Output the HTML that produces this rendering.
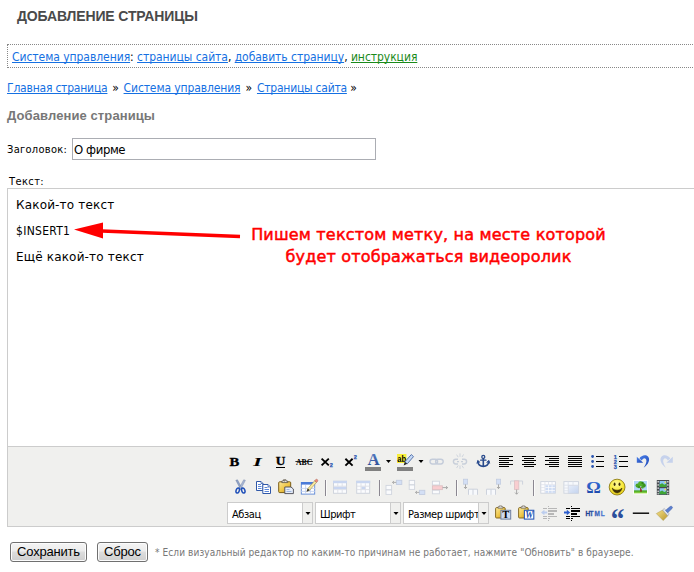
<!DOCTYPE html>
<html lang="ru">
<head>
<meta charset="utf-8">
<title>Добавление страницы</title>
<style>
html,body{margin:0;padding:0;background:#fff;}
body{width:694px;height:572px;position:relative;overflow:hidden;font-family:"DejaVu Sans Condensed","Liberation Sans",sans-serif;font-size:12px;color:#000;}
.abs{position:absolute;white-space:nowrap;}
a{color:#1570e2;text-decoration:underline;text-decoration-skip-ink:none;}
a.g{color:#1a8a1a;}
h1{position:absolute;left:17px;top:8px;margin:0;font:bold 14px/16px "Liberation Sans",sans-serif;color:#4a4a4a;letter-spacing:-0.14px;white-space:nowrap;}
.nav{position:absolute;left:7px;top:44px;width:720px;height:22px;border:1px dotted #888;box-sizing:content-box;}
.nav div{position:absolute;left:4px;top:4px;line-height:16px;white-space:nowrap;letter-spacing:-0.05px;}
.crumbs{left:7px;top:80px;line-height:16px;letter-spacing:-0.05px;}
.crumbs a{letter-spacing:-0.12px;}
h2{position:absolute;left:7px;top:108px;margin:0;font:bold 13px/16px "Liberation Sans",sans-serif;color:#777;white-space:nowrap;letter-spacing:0.1px;}
.lbl{font-size:11px;line-height:14px;}
.inp{position:absolute;left:72px;top:138px;width:302px;height:20px;border:1px solid #abadb3;background:#fff;font-size:13px;line-height:20px;}
.inp span{position:absolute;left:1px;top:1px;letter-spacing:-0.4px;}
.ed{position:absolute;left:7px;top:188px;width:720px;height:337px;border:1px solid #ccc;border-right:none;background:#fff;}
.ed p{position:absolute;left:8px;margin:0;font:12px/16px "DejaVu Sans","Liberation Sans",sans-serif;white-space:nowrap;letter-spacing:0.17px;}
.tb{position:absolute;left:0;top:257px;width:720px;height:79px;border-top:1px solid #ccc;background:#f0f0ee;}
.red{color:#f00;font:16px/22px "DejaVu Sans","Liberation Sans",sans-serif;-webkit-text-stroke:0.5px #f00;text-align:center;letter-spacing:0.19px;}
.btn{position:absolute;top:542px;height:18px;border:1px solid #707070;border-radius:3px;background:linear-gradient(#f4f4f4 0%,#ececec 45%,#dddddd 50%,#cfcfcf 100%);box-shadow:inset 0 0 0 1px #fcfcfc;font:13px/18px "Liberation Sans",sans-serif;text-align:center;color:#000;letter-spacing:-0.2px;}
.note{left:155px;top:547px;font-size:10px;line-height:12px;color:#777;letter-spacing:0.09px;}
.sel{position:absolute;top:502px;width:84px;height:20px;border:1px solid #ccc;background:#fff;font-size:11px;line-height:20px;overflow:hidden;}
.sel span{position:absolute;left:4px;top:1.5px;white-space:nowrap;letter-spacing:-0.42px;}
.sel i{position:absolute;left:74px;top:0;width:10px;height:20px;background:#f0f0ee;border-left:1px solid #ccc;}
#ico{position:absolute;left:0;top:0;}
</style>
</head>
<body>
<h1>ДОБАВЛЕНИЕ СТРАНИЦЫ</h1>
<div class="nav"><div><a href="#">Система управления</a>: <a href="#">страницы сайта</a>, <a href="#">добавить страницу</a>, <a href="#" class="g">инструкция</a></div></div>
<div class="abs crumbs"><a href="#" style="letter-spacing:-0.21px">Главная страница</a> <span style="padding:0 1.400px">»</span> <a href="#">Система управления</a> <span style="padding:0 1.600px">»</span> <a href="#" style="letter-spacing:-0.23px">Страницы сайта</a> »</div>
<h2>Добавление страницы</h2>
<div class="abs lbl" style="left:7px;top:143px;letter-spacing:0.3px;">Заголовок:</div>
<div class="inp"><span>О фирме</span></div>
<div class="abs lbl" style="left:9px;top:175px;letter-spacing:0.4px;">Текст:</div>
<div class="ed">
<p style="top:8px;">Какой-то текст</p>
<p style="top:34px;font-family:'DejaVu Sans Condensed','Liberation Sans',sans-serif;letter-spacing:0.3px;">$INSERT1</p>
<p style="top:60px;">Ещё какой-то текст</p>
<div class="tb" id="tb"></div>
</div>
<svg class="abs" style="left:70px;top:218px;" width="180" height="26" viewBox="70 218 180 26"><polygon points="74,229.5 103,222.5 103,238.5" fill="#f00"/><line x1="102" y1="231" x2="240" y2="236.5" stroke="#f00" stroke-width="3.4"/></svg>
<div class="abs red" style="left:228.500px;top:224px;width:400px;">Пишем текстом метку, на месте которой<br>будет отображаться видеоролик</div>
<div class="sel" style="left:227px;"><span>Абзац</span><i></i></div>
<div class="sel" style="left:315px;"><span>Шрифт</span><i></i></div>
<div class="sel" style="left:403px;"><span>Размер шрифта</span><i></i></div>
<svg id="ico" width="694" height="572" viewBox="0 0 694 572">
<defs>
<linearGradient id="gA" x1="0" y1="0" x2="0" y2="1"><stop offset="0" stop-color="#5f88cc"/><stop offset="1" stop-color="#1f3f8c"/></linearGradient>
<linearGradient id="gClip" x1="0" y1="0" x2="1" y2="1"><stop offset="0" stop-color="#fbe9a0"/><stop offset="0.500" stop-color="#f0c84a"/><stop offset="1" stop-color="#c4901c"/></linearGradient>
<linearGradient id="gMerge" x1="0" y1="0" x2="1" y2="1"><stop offset="0" stop-color="#e6edf9"/><stop offset="1" stop-color="#c5d4ef"/></linearGradient>
<linearGradient id="gOm" x1="0" y1="0" x2="0" y2="1"><stop offset="0" stop-color="#3a74e0"/><stop offset="1" stop-color="#173f9f"/></linearGradient>
<radialGradient id="gSm" cx="0.450" cy="0.300" r="0.750"><stop offset="0" stop-color="#fdf89a"/><stop offset="0.550" stop-color="#f8ea3c"/><stop offset="1" stop-color="#e0c416"/></radialGradient>
<linearGradient id="gGr" x1="0" y1="0" x2="0" y2="1"><stop offset="0" stop-color="#2b9a12"/><stop offset="1" stop-color="#a4dc52"/></linearGradient>
<linearGradient id="gHtml" gradientUnits="userSpaceOnUse" x1="0" y1="0" x2="22" y2="0"><stop offset="0" stop-color="#1b3c8c"/><stop offset="1" stop-color="#4f80dc"/></linearGradient>
<linearGradient id="gBr" x1="0" y1="0" x2="1" y2="1"><stop offset="0" stop-color="#f4e08a"/><stop offset="1" stop-color="#b8962c"/></linearGradient>
<linearGradient id="gUndo" x1="0" y1="0" x2="1" y2="1"><stop offset="0" stop-color="#4a7fe8"/><stop offset="1" stop-color="#1f49b8"/></linearGradient>
</defs>
<!-- ROW 1 -->
<g font-family="'Liberation Serif',serif" font-weight="bold" fill="#000" stroke="#000" stroke-width="0.35">
<text x="229.600" y="465.800" font-size="13.200" textLength="9.800" lengthAdjust="spacingAndGlyphs">B</text>
<text x="253.300" y="465.800" font-size="13.400" font-style="italic" stroke-width="0.100" textLength="8.400" lengthAdjust="spacingAndGlyphs">I</text>
<text x="275.8" y="465.4" font-size="12.5" textLength="9.6" lengthAdjust="spacingAndGlyphs">U</text>
<rect x="276" y="467" width="9" height="1" stroke="none"/>
<text x="296" y="465.3" font-size="9.2" stroke-width="0" textLength="16.4" lengthAdjust="spacingAndGlyphs">ABC</text>
<rect x="295.4" y="461.2" width="17.4" height="0.8" stroke="none"/>
</g>
<!-- subscript / superscript -->
<g stroke="#000" stroke-width="1.9" stroke-linecap="butt" fill="none">
<path d="M321.6 458.6L328.8 465.4M328.8 458.6L321.6 465.4"/>
<path d="M345.4 458.8L352.6 465.6M352.6 458.8L345.4 465.6"/>
</g>
<text x="329.8" y="467" font-family="'Liberation Sans',sans-serif" font-weight="bold" font-size="5.6" fill="#2a55b0" stroke="#2a55b0" stroke-width="0.25">2</text>
<text x="353.8" y="459.4" font-family="'Liberation Sans',sans-serif" font-weight="bold" font-size="5.6" fill="#2a55b0" stroke="#2a55b0" stroke-width="0.25">2</text>
<!-- forecolor -->
<text x="367.4" y="465.3" font-family="'Liberation Serif',serif" font-weight="bold" font-size="16.5" fill="url(#gA)" textLength="12.2" lengthAdjust="spacingAndGlyphs">A</text>
<rect x="365" y="467" width="16" height="4" fill="#808080"/>
<path d="M386 460h5l-2.5 3z" fill="#000"/>
<!-- backcolor -->
<rect x="397" y="454" width="9.4" height="9" fill="#f7ee3a"/>
<text x="397.2" y="461.6" font-family="'Liberation Sans',sans-serif" font-size="8.5" font-weight="bold" fill="#000" textLength="8.8" lengthAdjust="spacingAndGlyphs">ab</text>
<path d="M411.3 454.6l2.2 2.0l-6.2 7.2l-2.6 -1.8z" fill="#c4d8f6" stroke="#3a5a9a" stroke-width="0.8"/>
<path d="M404.7 462l2.6 1.8l-3.6 1.6z" fill="#222"/>
<rect x="397" y="467" width="16" height="4" fill="#808080"/>
<path d="M418.5 460h5l-2.5 3z" fill="#000"/>
<!-- link (disabled) -->
<g fill="none" stroke="#c4ccda" stroke-width="1.4">
<rect x="430" y="459.2" width="7.6" height="4.8" rx="2.4"/>
<rect x="435.6" y="459.2" width="7.6" height="4.8" rx="2.4"/>
</g>
<!-- unlink (disabled) -->
<g fill="none" stroke="#c8cfda" stroke-width="1.4">
<path d="M458 459.2h-2.2a2.4 2.4 0 0 0 0 4.8h2.2M457 461.6h2"/>
<path d="M462 459.2h2.2a2.4 2.4 0 0 1 0 4.8h-2.2M461 461.6h2" />
</g>
<g stroke="#c9d0da" stroke-width="0.9">
<path d="M460 453.4v3.4M456.6 454.6l1.6 2.6M463.6 454.4l-1.6 2.6M460 469v-3.4M456.6 468l1.6 -2.6M463.6 468.2l-1.6 -2.6"/>
</g>
<!-- anchor -->
<g fill="none" stroke="#284a8c" stroke-linecap="round">
<circle cx="483.3" cy="456.9" r="1.5" stroke-width="1.3"/>
<path d="M483.3 458.6V466" stroke-width="1.6"/>
<path d="M480.6 460.2h5.4" stroke-width="1.2"/>
<path d="M477.8 461.4c0.4 3.4 2.6 5 5.5 5c2.9 0 5.1 -1.6 5.5 -5" stroke-width="1.6"/>
<path d="M477 463.2l0.8 -2.6l2 1.6M489.6 463.2l-0.8 -2.6l-2 1.6" stroke-width="0.9" fill="#2c4f94"/>
</g>
<!-- align left/center/right/justify -->
<g fill="#000">
<rect x="499" y="456" width="14" height="1"/><rect x="499" y="458" width="10" height="1"/><rect x="499" y="460" width="14" height="1"/><rect x="499" y="462" width="10" height="1"/><rect x="499" y="464" width="14" height="1"/><rect x="499" y="466" width="10" height="1"/>
<rect x="522" y="456" width="14" height="1"/><rect x="524" y="458" width="10" height="1"/><rect x="522" y="460" width="14" height="1"/><rect x="524" y="462" width="10" height="1"/><rect x="522" y="464" width="14" height="1"/><rect x="524" y="466" width="10" height="1"/>
<rect x="545" y="456" width="14" height="1"/><rect x="549" y="458" width="10" height="1"/><rect x="545" y="460" width="14" height="1"/><rect x="549" y="462" width="10" height="1"/><rect x="545" y="464" width="14" height="1"/><rect x="549" y="466" width="10" height="1"/>
<rect x="568" y="456" width="14" height="1"/><rect x="568" y="458" width="14" height="1"/><rect x="568" y="460" width="14" height="1"/><rect x="568" y="462" width="14" height="1"/><rect x="568" y="464" width="14" height="1"/><rect x="568" y="466" width="14" height="1"/>
<!-- ul -->
<rect x="596" y="456" width="8" height="1"/><rect x="596" y="461" width="8" height="1"/><rect x="596" y="466" width="8" height="1"/>
<!-- ol -->
<rect x="619" y="456" width="9" height="1"/><rect x="619" y="461" width="9" height="1"/><rect x="619" y="466" width="9" height="1"/>
</g>
<g fill="#2a55b0"><circle cx="592.6" cy="456.5" r="1.4"/><circle cx="592.6" cy="461.5" r="1.4"/><circle cx="592.6" cy="466.5" r="1.4"/></g>
<g font-family="'Liberation Sans',sans-serif" font-weight="bold" font-size="5.6" fill="#2a55b0" stroke="#2a55b0" stroke-width="0.25">
<text x="613.8" y="458.8">1</text><text x="613.8" y="463.8">2</text><text x="613.8" y="468.8">3</text>
</g>
<!-- undo -->
<g fill="url(#gUndo)">
<path d="M636.800 456.800v6h6.400z"/>
<path d="M639.400 458.400C641 455.600 645.600 454 648 456.600C650.600 459.600 648.400 464.800 643.600 467.800C646 464.400 647.200 461 645.800 459C644.800 457.600 643 458.400 641.800 460.600z"/>
</g>
<!-- redo (disabled) -->
<g fill="#c6d2ec" transform="translate(1309.600 0) scale(-1 1)">
<path d="M636.800 456.800v6h6.400z"/>
<path d="M639.400 458.400C641 455.600 645.600 454 648 456.600C650.600 459.600 648.400 464.800 643.600 467.800C646 464.400 647.200 461 645.800 459C644.800 457.600 643 458.400 641.800 460.600z"/>
</g>
<!-- ROW 2 -->
<!-- cut -->
<path d="M235.800 480.300l1.700 -0.500l4.700 8.600l-1.500 1.200z" fill="#8fa1c6" stroke="#66789f" stroke-width="0.400"/>
<path d="M245.400 480.300l-1.700 -0.500l-4.700 8.600l1.500 1.200z" fill="#a9b8d6" stroke="#66789f" stroke-width="0.400"/>
<g fill="none" stroke="#1f4fb8" stroke-width="1.500">
<ellipse cx="237.700" cy="490.500" rx="1.600" ry="2.600" transform="rotate(18 237.700 490.500)"/>
<ellipse cx="243.300" cy="490.500" rx="1.600" ry="2.600" transform="rotate(-18 243.300 490.500)"/>
</g>
<!-- copy -->
<g stroke="#3058a8" stroke-width="1">
<path d="M256.5 481.5h4.5l2 2v7h-6.5z" fill="#fff"/>
<path d="M262.8 484.5h5.2l2.5 2.5v6.5h-7.7z" fill="#fff"/>
</g>
<path d="M261 481.5v2h2M268 484.5v2.5h2.5" fill="#c9d8f2" stroke="#3058a8" stroke-width="0.7"/>
<g stroke="#5b86d8" stroke-width="1"><path d="M258 484.500h3M258 486.500h3.500M258 488.500h3.500M264.500 487.500h3M264.500 489.500h4.500M264.500 491.500h4.500"/></g>
<!-- paste -->
<rect x="278.700" y="481.800" width="12" height="10.800" rx="1" fill="url(#gClip)" stroke="#7a5c14" stroke-width="1"/>
<path d="M281.800 482.600v-1.600h1.600v-1.200h2.600v1.200h1.600v1.600z" fill="#ececec" stroke="#5a5240" stroke-width="0.800"/><rect x="284" y="480.400" width="1.200" height="1" fill="#5a5240"/>
<path d="M284.800 487h6.200l2.400 2v4.600h-8.600z" fill="#e6edf9" stroke="#4a4a52" stroke-width="0.9"/>
<path d="M286.500 489.500h3M286.500 491.500h5" stroke="#8ba6d8" stroke-width="0.8"/>
<!-- table edit (insert/edit table) -->
<rect x="301.300" y="482.500" width="13.400" height="11.600" fill="#fff" stroke="#5c87d6" stroke-width="0.9"/>
<rect x="301" y="482" width="14" height="2.600" fill="#4a7ad8"/>
<path d="M301 488.400h14M301 491.400h14M305.600 484.800v9.400M310.400 484.800v9.400" stroke="#bccdee" stroke-width="0.8"/>
<path d="M307.800 488.600l6.800 -7.800l1.900 1.600l-6.800 7.800l-2.900 1.400z" fill="#f8e79c" stroke="#8d7c44" stroke-width="0.5"/>
<path d="M314.600 480.800l1.100 -1.200a1.250 1.250 0 0 1 1.900 1.600l-1.100 1.200z" fill="#ec8a7a" stroke="#9a5a4a" stroke-width="0.4"/>
<path d="M307.800 488.600l1.900 1.600l-2.900 1.400z" fill="#222"/>
<!-- separators -->
<g>
<rect x="325" y="480" width="1" height="16" fill="#8b8791"/><rect x="326" y="480" width="1" height="16" fill="#fbfbfa"/>
<rect x="379" y="480" width="1" height="16" fill="#8b8791"/><rect x="380" y="480" width="1" height="16" fill="#fbfbfa"/>
<rect x="456" y="480" width="1" height="16" fill="#8b8791"/><rect x="457" y="480" width="1" height="16" fill="#fbfbfa"/>
<rect x="533" y="480" width="1" height="16" fill="#8b8791"/><rect x="534" y="480" width="1" height="16" fill="#fbfbfa"/>
</g>
<!-- row props (disabled) -->
<g>
<rect x="333.500" y="481.300" width="13" height="12" fill="#fbfcfe" stroke="#cfd4dd" stroke-width="1"/>
<rect x="333" y="480.800" width="14" height="2.400" fill="#c9d6f0"/>
<rect x="334" y="486.600" width="12" height="2.600" fill="#c9d6f1"/>
<path d="M333.500 486.200h13M333.500 489.600h13M337.800 483.200v3M342.200 483.200v3M337.800 489.600v3.600M342.200 489.600v3.600" stroke="#dcdfe6" stroke-width="0.9"/>
</g>
<!-- cell props (disabled) -->
<g>
<rect x="356.700" y="481.300" width="13" height="12" fill="#fbfcfe" stroke="#cfd4dd" stroke-width="1"/>
<rect x="356.200" y="480.800" width="14" height="2.400" fill="#c9d6f0"/>
<rect x="361.400" y="486.600" width="4" height="2.800" fill="#c9d6f0"/>
<path d="M356.700 486.200h13M356.700 489.600h13M361 483.200v10M365.400 483.200v10" stroke="#dcdfe6" stroke-width="0.9"/>
</g>
<!-- row before (disabled) -->
<g stroke="#d0d5de" stroke-width="0.9" fill="#fafbfd">
<rect x="386" y="485.400" width="5.600" height="4.400"/><rect x="386" y="490" width="5.600" height="4.400"/>
<rect x="396.400" y="480.300" width="5.400" height="4.200" fill="#d3dff5" stroke="#c3cde0"/>
</g>
<path d="M396.200 482.400h-3.600M394 481l-1.600 1.400l1.600 1.400" stroke="#a5a5a5" stroke-width="0.9" fill="none"/>
<!-- row after (disabled) -->
<g stroke="#d0d5de" stroke-width="0.9" fill="#fafbfd">
<rect x="409.200" y="480.400" width="5.400" height="4.400"/><rect x="409.200" y="485" width="5.400" height="4.400"/>
<rect x="419.400" y="490.300" width="5.400" height="4.200" fill="#d3dff5" stroke="#c3cde0"/>
</g>
<path d="M419.200 492.400h-3.600M417 491l-1.600 1.400l1.600 1.400" stroke="#a5a5a5" stroke-width="0.9" fill="none"/>
<!-- delete row (disabled) -->
<g stroke="#d0d5de" stroke-width="0.9" fill="#fafbfd">
<rect x="432.400" y="481.200" width="7" height="3.800"/><rect x="432.400" y="490.200" width="7" height="3.600"/>
<rect x="432.400" y="485.800" width="10" height="3.800" fill="#f9cdd0" stroke="#dcc0c4"/>
</g>
<path d="M442.600 487.600h5M446 486.200l1.600 1.400l-1.600 1.400" stroke="#a0a0a0" stroke-width="0.9" fill="none"/>
<!-- col before (disabled) -->
<rect x="463.400" y="479.200" width="4.200" height="5" fill="#d3dff5" stroke="#c3cde0" stroke-width="0.8"/>
<path d="M465.500 484.400v4M464 487l1.500 1.600l1.500 -1.600" stroke="#a0a0a0" stroke-width="0.9" fill="none"/>
<path d="M468.500 494.800v-5.600h9v5.600M473 489.200v5.600" stroke="#cdd2dc" stroke-width="1" fill="#f7f9fc"/>
<!-- col after (disabled) -->
<rect x="496.400" y="479.200" width="4.200" height="5" fill="#d3dff5" stroke="#c3cde0" stroke-width="0.8"/>
<path d="M498.500 484.400v4M497 487l1.500 1.600l1.500 -1.600" stroke="#a0a0a0" stroke-width="0.9" fill="none"/>
<path d="M486.500 494.800v-5.600h9v5.600M491 489.200v5.600" stroke="#cdd2dc" stroke-width="1" fill="#f7f9fc"/>
<!-- delete col (disabled) -->
<path d="M510.600 484.600v-3.600h12v3.600" stroke="#cdd2dc" stroke-width="1" fill="none"/>
<rect x="514.400" y="480.800" width="4.400" height="8.600" fill="#f9cdd0" stroke="#dcc0c4" stroke-width="0.8"/>
<path d="M516.600 489.600v4.600M515 492.600l1.600 1.600l1.600 -1.600" stroke="#a0a0a0" stroke-width="0.9" fill="none"/>
<!-- split cells (disabled) -->
<g>
<rect x="540.800" y="481.600" width="14.600" height="11.600" fill="#fdfdfe" stroke="#cdd3de" stroke-width="0.900"/>
<path d="M540.800 484.700h14.600M540.800 487.600h4M540.800 490.400h4M544.900 481.600v11.600M548.500 481.600v3M552 481.600v3" stroke="#dde1ea" stroke-width="0.800"/>
<rect x="545.400" y="485.200" width="2.800" height="2.100" fill="#cfdcf3"/><rect x="545.400" y="488.000" width="2.800" height="2.100" fill="#cfdcf3"/><rect x="545.400" y="490.800" width="2.800" height="2.100" fill="#cfdcf3"/><rect x="548.900" y="485.200" width="2.800" height="2.100" fill="#cfdcf3"/><rect x="548.900" y="488.000" width="2.800" height="2.100" fill="#cfdcf3"/><rect x="548.900" y="490.800" width="2.800" height="2.100" fill="#cfdcf3"/><rect x="552.400" y="485.200" width="2.800" height="2.100" fill="#cfdcf3"/><rect x="552.400" y="488.000" width="2.800" height="2.100" fill="#cfdcf3"/><rect x="552.400" y="490.800" width="2.800" height="2.100" fill="#cfdcf3"/>
</g>
<!-- merge cells (disabled) -->
<g>
<rect x="563.900" y="481.600" width="14.600" height="11.600" fill="#f7f9fc" stroke="#cdd3de" stroke-width="0.9"/>
<rect x="568.400" y="485.400" width="10" height="7.800" fill="url(#gMerge)" stroke="#cdd3de" stroke-width="0.6"/>
<path d="M563.900 485.200h14.600M563.900 488h4.400M563.900 490.800h4.400M568.200 481.600v11.600M573 481.600v3.600" stroke="#dde1ea" stroke-width="0.9"/>
</g>
<!-- charmap -->
<text x="586.200" y="493" font-family="'Liberation Serif',serif" font-weight="bold" font-size="17" fill="url(#gOm)" textLength="14.600" lengthAdjust="spacingAndGlyphs">Ω</text>
<!-- emotions -->
<circle cx="617.100" cy="487.100" r="7.900" fill="url(#gSm)" stroke="#8f7d12" stroke-width="0.9"/>
<ellipse cx="614.600" cy="484.300" rx="0.950" ry="1.700" fill="#3a2c06"/><ellipse cx="619.500" cy="484.300" rx="0.950" ry="1.700" fill="#3a2c06"/>
<path d="M612.200 488c1.200 1.500 3 2.200 4.900 2.200c1.900 0 3.700 -0.700 4.900 -2.200c-0.800 3.300 -2.700 4.900 -4.900 4.900c-2.200 0 -4.100 -1.600 -4.900 -4.900z" fill="#3e3006" stroke="#3e3006" stroke-width="0.600" stroke-linejoin="round"/>
<!-- image -->
<rect x="633" y="480" width="15" height="14.400" fill="#fdfdfd"/>
<rect x="634" y="481" width="13" height="9.600" fill="#b4d6f8"/>
<rect x="634" y="490.400" width="13" height="3" fill="url(#gGr)"/>
<path d="M640.200 491.800l0.400 -3l0.800 0l0.500 3z" fill="#8a2a1a"/>
<path d="M640.800 491l-0.400 -3.400l-2.200 -1.800M640.600 488l2.400 -2" stroke="#9a2a1a" stroke-width="0.800" fill="none"/><circle cx="637.600" cy="485.600" r="2.100" fill="#4aa626"/><circle cx="643.600" cy="485.400" r="2.200" fill="#3a9420"/><circle cx="640.600" cy="483.800" r="2.500" fill="#52b02c"/><circle cx="639" cy="487" r="1.300" fill="#3a9420"/><circle cx="642.400" cy="487.400" r="1.200" fill="#4aa626"/><circle cx="642.600" cy="483" r="1.200" fill="#2f8418"/>
<!-- media -->
<rect x="656.800" y="480" width="12.400" height="15" fill="#474a4f"/>
<rect x="659.600" y="481" width="6.800" height="6" fill="#8cc6f4"/><rect x="659.600" y="488.200" width="6.800" height="6" fill="#8cc6f4"/>
<path d="M659.600 487v-2.400l2.600 -1.400l2 1.600l2.200 -1v3.200zM659.600 494.200v-2.400l2.600 -1.400l2 1.600l2.200 -1v3.200z" fill="#3fa535"/>
<circle cx="665.300" cy="482.300" r="0.900" fill="#f6e048"/><circle cx="665.300" cy="489.500" r="0.900" fill="#f6e048"/>
<g fill="#e9e9e9"><rect x="657.500" y="481" width="1.300" height="1.500"/><rect x="657.500" y="484.200" width="1.300" height="1.500"/><rect x="657.500" y="487.400" width="1.300" height="1.500"/><rect x="657.500" y="490.600" width="1.300" height="1.500"/><rect x="657.500" y="493.200" width="1.300" height="1.200"/>
<rect x="667.200" y="481" width="1.300" height="1.500"/><rect x="667.200" y="484.200" width="1.300" height="1.500"/><rect x="667.200" y="487.400" width="1.300" height="1.500"/><rect x="667.200" y="490.600" width="1.300" height="1.500"/><rect x="667.200" y="493.200" width="1.300" height="1.200"/></g>
<!-- ROW 3 -->
<!-- select arrows -->
<g fill="#000"><path d="M305.500 512h5l-2.500 3z"/><path d="M393.500 512h5l-2.500 3z"/><path d="M481.500 512h5l-2.500 3z"/></g>
<!-- paste text -->
<rect x="495.600" y="507.600" width="9.600" height="10.400" rx="1" fill="url(#gClip)" stroke="#7a5c14" stroke-width="0.9"/>
<path d="M498 508.200v-1.400h1.300v-0.900h2.400v0.900h1.300v1.400z" fill="#e8e8e8" stroke="#6a6250" stroke-width="0.7"/>
<rect x="500.900" y="510.300" width="9.800" height="8.800" fill="#cfdaf0" stroke="#6f7f9f" stroke-width="1"/>
<text x="502.300" y="517.800" font-family="'Liberation Serif',serif" font-weight="bold" font-size="9.500" fill="#000" textLength="7" lengthAdjust="spacingAndGlyphs">T</text>
<!-- paste word -->
<rect x="518.600" y="507.600" width="9.600" height="10.400" rx="1" fill="url(#gClip)" stroke="#7a5c14" stroke-width="0.9"/>
<path d="M521 508.200v-1.400h1.300v-0.900h2.400v0.900h1.300v1.400z" fill="#e8e8e8" stroke="#6a6250" stroke-width="0.7"/>
<rect x="524.400" y="510.300" width="9.400" height="8.800" fill="#fff" stroke="#2a5ab8" stroke-width="1.100"/>
<text x="525.200" y="517.900" font-family="'Liberation Serif',serif" font-weight="bold" font-style="italic" font-size="9.500" fill="#2450b0" textLength="8" lengthAdjust="spacingAndGlyphs">W</text>
<!-- outdent (disabled) -->
<g fill="#b7b7b7"><rect x="543" y="508" width="4" height="1"/><rect x="548" y="508" width="9" height="1"/><rect x="548" y="510" width="9" height="2"/><rect x="548" y="513" width="6" height="2"/><rect x="543" y="516" width="4" height="1"/><rect x="548" y="516" width="9" height="1"/><rect x="543" y="518" width="4" height="1"/><rect x="548" y="518" width="2" height="1"/><rect x="548" y="506" width="1" height="1"/><rect x="548" y="520" width="1" height="1"/></g>
<path d="M541 512.500l3.400 -2.700v1.700h2.800v2h-2.800v1.700z" fill="#bccdee"/>
<!-- indent -->
<g fill="#000"><rect x="566" y="508" width="4" height="1"/><rect x="571" y="508" width="9" height="1"/><rect x="571" y="510" width="9" height="2"/><rect x="571" y="513" width="6" height="2"/><rect x="566" y="516" width="4" height="1"/><rect x="571" y="516" width="9" height="1"/><rect x="566" y="518" width="4" height="1"/><rect x="571" y="518" width="2" height="1"/><rect x="571" y="506" width="1" height="1"/><rect x="571" y="520" width="1" height="1"/></g>
<path d="M570.2 512.500l-3.400 -2.700v1.700h-2.800v2h2.800v1.700z" fill="#2a5ccc"/>
<!-- html -->
<text transform="translate(585.600 515.900) scale(0.920 1)" x="0 4.240 9.670 16.600" y="0" font-family="'Liberation Sans',sans-serif" font-weight="bold" font-size="7.100" fill="url(#gHtml)" stroke="url(#gHtml)" stroke-width="0.250">HTML</text>
<!-- blockquote -->
<text x="610.700" y="529" font-family="'Liberation Serif',serif" font-weight="bold" font-size="29.200" fill="#2c4f9c" textLength="13.700" lengthAdjust="spacingAndGlyphs">“</text>
<!-- hr -->
<rect x="632.800" y="512.500" width="16.300" height="1.400" fill="#000"/>
<!-- cleanup -->
<path d="M656.300 513.600l6.300 -3.600l5.200 5.800l-4.600 4.800z" fill="url(#gBr)" stroke="#a08a38" stroke-width="0.400"/>
<path d="M662.600 510l1.700 -1.500l4.800 5.300l-1.300 2z" fill="#e4e7ee" stroke="#8a8f9c" stroke-width="0.500"/>
<path d="M665.500 510.400l4.600 -3.800a1.300 1.300 0 0 1 1.900 2l-4.300 4.200z" fill="#5b7fd0" stroke="#3f5ca6" stroke-width="0.500"/>

</svg>
<div class="btn" style="left:10px;width:75px;">Сохранить</div>
<div class="btn" style="left:97px;width:49px;">Сброс</div>
<div class="abs note">* Если визуальный редактор по каким-то причинам не работает, нажмите "Обновить" в браузере.</div>
</body>
</html>
